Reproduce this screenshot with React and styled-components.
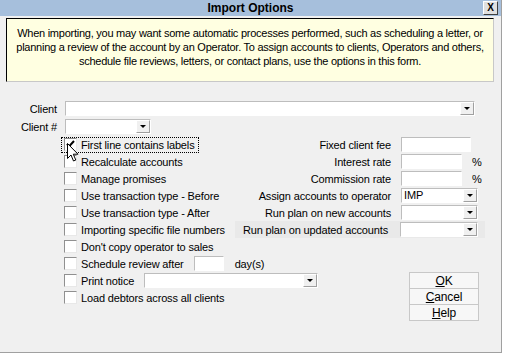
import React from 'react';
import styled, { createGlobalStyle } from 'styled-components';

const GlobalStyle = createGlobalStyle`
  body {
    margin: 0;
    background: #ffffff;
  }
`;

const Window = styled.div`
  position: relative;
  width: 501px;
  height: 352px;
  background: #f0f0f0;
  border-right: 1px solid #a0a0a0;
  border-bottom: 1px solid #a0a0a0;
  font-family: "Liberation Sans", Arial, sans-serif;
  font-size: 11px;
  letter-spacing: -0.15px;
  color: #000;
  overflow: hidden;
`;

const TitleBar = styled.div`
  display: grid;
  grid-template-columns: 1fr auto 1fr;
  align-items: center;
  height: 16px;
  background: #a6bfdc;
`;

const Title = styled.div`
  grid-column: 2;
  font-weight: bold;
  font-size: 12px;
  letter-spacing: 0;
`;

const CloseButton = styled.div`
  grid-column: 3;
  justify-self: end;
  margin-right: 3px;
  width: 13px;
  height: 12px;
  background: #e0e0e0;
  border: 1px solid;
  border-color: #ffffff #404040 #404040 #ffffff;
  display: flex;
  align-items: center;
  justify-content: center;
  font-weight: bold;
  font-size: 10px;
  line-height: 1;
`;

const InfoBox = styled.div`
  margin: 2px 0 0 6px;
  width: 488px;
  height: 64px;
  box-sizing: border-box;
  background: #ffffe1;
  border: 1px solid;
  border-color: #000 #c8c8c8 #c8c8c8 #000;
  padding-top: 7px;
  text-align: center;
  line-height: 14px;
  white-space: nowrap;
  letter-spacing: -0.25px;
`;

const FieldRow = styled.div`
  display: grid;
  grid-template-columns: 57px max-content;
  column-gap: 8px;
  align-items: center;
  margin-top: ${({ top }) => top}px;
`;

const Label = styled.div`
  text-align: right;
  white-space: nowrap;
`;

const Combo = styled.div`
  display: flex;
  width: ${({ width }) => width}px;
  height: 15px;
  box-sizing: border-box;
  background: #fff;
  border: 1px solid;
  border-color: #bdbdbd #ffffff #ffffff #bdbdbd;
`;

const ComboText = styled.div`
  flex: 1;
  padding-left: 2px;
  line-height: 13px;
`;

const ComboButton = styled.div`
  width: 14px;
  height: 13px;
  box-sizing: border-box;
  margin-left: 2px;
  background: #f0f0f0;
  border: 1px solid;
  border-color: #ffffff #a0a0a0 #a0a0a0 #ffffff;
  display: flex;
  align-items: center;
  justify-content: center;
`;

const Arrow = styled.div`
  width: 0;
  height: 0;
  border-left: 3px solid transparent;
  border-right: 3px solid transparent;
  border-top: 3px solid #000;
`;

const TextInput = styled.div`
  width: ${({ width }) => width}px;
  height: 15px;
  box-sizing: border-box;
  background: #fff;
  border: 1px solid;
  border-color: #bdbdbd #ffffff #ffffff #bdbdbd;
`;

const Main = styled.div`
  display: grid;
  grid-template-columns: 64px 172px 1fr;
  grid-template-rows: repeat(11, 17px);
  margin-top: 2px;
`;

const CheckRow = styled.div`
  grid-column: ${({ wide }) => (wide ? '2 / 4' : '2')};
  grid-row: ${({ row }) => row};
  display: flex;
  align-items: center;
  gap: 4px;
  white-space: nowrap;
`;

const Focus = styled.div`
  display: flex;
  align-items: center;
  gap: 4px;
  margin-left: -2px;
  padding: 0 3px 0 2px;
  height: 14px;
  outline: 1px dotted #000;
`;

const Box = styled.div`
  position: relative;
  width: 13px;
  height: 13px;
  box-sizing: border-box;
  background: #fff;
  border: 1px solid;
  border-color: #909090 #e8e8e8 #e8e8e8 #909090;
  flex-shrink: 0;
`;

const Check = styled.svg`
  display: block;
`;

const Suffix = styled.span`
  margin-left: ${({ gap }) => gap}px;
`;

const RightRow = styled.div`
  grid-column: 3;
  grid-row: ${({ row }) => row};
  display: grid;
  grid-template-columns: 155px max-content max-content;
  column-gap: 10px;
  align-items: center;
  white-space: nowrap;
`;

const Panel = styled(RightRow)`
  grid-template-columns: 152px max-content;
  column-gap: 12px;
  background: #e9e9e9;
  margin: 0 16px 0 -1px;
  padding-left: 1px;
`;

const Buttons = styled.div`
  grid-column: 3;
  grid-row: 9 / 12;
  display: flex;
  flex-direction: column;
  margin-left: 173px;
  width: 70px;
`;

const Button = styled.div`
  height: 17px;
  box-sizing: border-box;
  background: #f7f7f7;
  border: 1px solid #c8c8c8;
  margin-top: ${({ first }) => (first ? 0 : -1)}px;
  display: flex;
  align-items: center;
  justify-content: center;
  font-size: 12px;
  u {
    text-decoration: underline;
  }
`;

const Cursor = styled.svg`
  position: absolute;
  left: 67px;
  top: 143px;
`;

const ComboField = ({ width, text }) => (
  <Combo width={width}>
    <ComboText>{text}</ComboText>
    <ComboButton>
      <Arrow />
    </ComboButton>
  </Combo>
);

const CheckMark = () => (
  <Check width="11" height="11" viewBox="0 0 11 11">
    <path d="M2 5 L4 7.5 L9 2" fill="none" stroke="#000" strokeWidth="2" />
  </Check>
);

const checks = [
  'Recalculate accounts',
  'Manage promises',
  'Use transaction type - Before',
  'Use transaction type - After',
  'Importing specific file numbers',
  "Don't copy operator to sales",
];

export default function App() {
  return (
    <>
      <GlobalStyle />
      <Window>
        <TitleBar>
          <Title>Import Options</Title>
          <CloseButton>X</CloseButton>
        </TitleBar>
        <InfoBox>
          When importing, you may want some automatic processes performed, such as scheduling a letter, or
          <br />
          planning a review of the account by an Operator. To assign accounts to clients, Operators and others,
          <br />
          schedule file reviews, letters, or contact plans, use the options in this form.
        </InfoBox>

        <FieldRow top={19}>
          <Label>Client</Label>
          <ComboField width={410} />
        </FieldRow>
        <FieldRow top={3}>
          <Label>Client #</Label>
          <ComboField width={86} />
        </FieldRow>

        <Main>
          <CheckRow row={1}>
            <Focus>
              <Box>
                <CheckMark />
              </Box>
              First line contains labels
            </Focus>
          </CheckRow>
          {checks.map((text, i) => (
            <CheckRow key={text} row={i + 2}>
              <Box />
              {text}
            </CheckRow>
          ))}
          <CheckRow row={8} wide>
            <Box />
            Schedule review after
            <Suffix gap={6}>
              <TextInput width={30} />
            </Suffix>
            <Suffix gap={7}>day(s)</Suffix>
          </CheckRow>
          <CheckRow row={9} wide>
            <Box />
            Print notice
            <Suffix gap={6}>
              <ComboField width={174} />
            </Suffix>
          </CheckRow>
          <CheckRow row={10}>
            <Box />
            Load debtors across all clients
          </CheckRow>

          <RightRow row={1}>
            <Label>Fixed client fee</Label>
            <TextInput width={70} />
          </RightRow>
          <RightRow row={2}>
            <Label>Interest rate</Label>
            <TextInput width={61} />
            <span>%</span>
          </RightRow>
          <RightRow row={3}>
            <Label>Commission rate</Label>
            <TextInput width={61} />
            <span>%</span>
          </RightRow>
          <RightRow row={4}>
            <Label>Assign accounts to operator</Label>
            <ComboField width={77} text="IMP" />
          </RightRow>
          <RightRow row={5}>
            <Label>Run plan on new accounts</Label>
            <ComboField width={77} />
          </RightRow>
          <Panel row={6}>
            <Label>Run plan on updated accounts</Label>
            <ComboField width={78} />
          </Panel>

          <Buttons>
            <Button first>
              <span><u>O</u>K</span>
            </Button>
            <Button>
              <span><u>C</u>ancel</span>
            </Button>
            <Button>
              <span><u>H</u>elp</span>
            </Button>
          </Buttons>
        </Main>

        <Cursor width="13" height="20" viewBox="0 0 13 20">
          <path
            d="M0.5 0.5 L0.5 15.5 L4 12 L6.5 18 L8.8 17 L6.3 11.2 L11 11.2 Z"
            fill="#fff"
            stroke="#000"
            strokeWidth="1"
          />
        </Cursor>
      </Window>
    </>
  );
}
